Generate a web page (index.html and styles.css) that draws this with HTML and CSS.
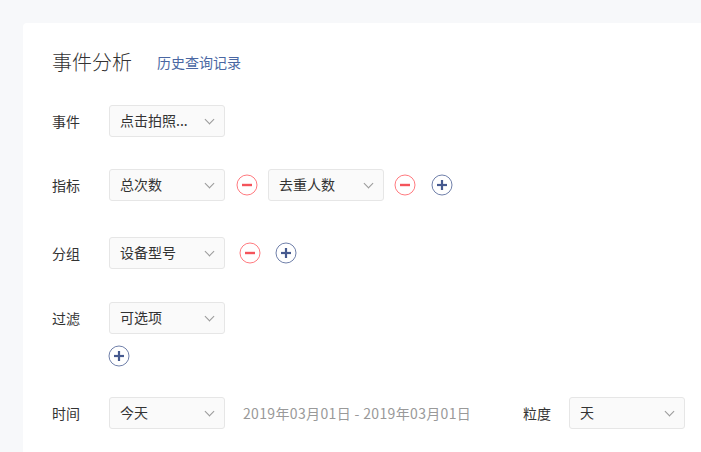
FILE: index.html
```html
<!DOCTYPE html>
<html lang="zh-CN">
<head>
  <meta charset="UTF-8" />
  <meta name="viewport" content="width=device-width, initial-scale=1.0"/>
  <title>事件分析</title>
  <link rel="stylesheet" href="styles.css">
</head>
<body>
  <div class="panel">
    <div class="header">
      <h1>事件分析</h1>
      <a href="#" class="history">历史查询记录</a>
    </div>

    <div class="row row-event">
      <span class="label">事件</span>
      <div class="select"><span>点击拍照...</span><i class="arrow"></i></div>
    </div>

    <div class="row row-metric">
      <span class="label">指标</span>
      <div class="select"><span>总次数</span><i class="arrow"></i></div>
      <svg class="btn minus m11" viewBox="0 0 22 22"><circle cx="11" cy="11" r="10"/><line x1="6" y1="11" x2="16" y2="11"/></svg>
      <div class="select m10"><span>去重人数</span><i class="arrow"></i></div>
      <svg class="btn minus m10" viewBox="0 0 22 22"><circle cx="11" cy="11" r="10"/><line x1="6" y1="11" x2="16" y2="11"/></svg>
      <svg class="btn plus m15" viewBox="0 0 22 22"><circle cx="11" cy="11" r="10"/><line x1="6" y1="11" x2="16" y2="11"/><line x1="11" y1="6" x2="11" y2="16"/></svg>
    </div>

    <div class="row row-group">
      <span class="label">分组</span>
      <div class="select"><span>设备型号</span><i class="arrow"></i></div>
      <svg class="btn minus m14" viewBox="0 0 22 22"><circle cx="11" cy="11" r="10"/><line x1="6" y1="11" x2="16" y2="11"/></svg>
      <svg class="btn plus m14" viewBox="0 0 22 22"><circle cx="11" cy="11" r="10"/><line x1="6" y1="11" x2="16" y2="11"/><line x1="11" y1="6" x2="11" y2="16"/></svg>
    </div>

    <div class="row row-filter">
      <span class="label">过滤</span>
      <div class="select"><span>可选项</span><i class="arrow"></i></div>
    </div>
    <div class="add-filter">
      <svg class="btn plus" viewBox="0 0 22 22"><circle cx="11" cy="11" r="10"/><line x1="6" y1="11" x2="16" y2="11"/><line x1="11" y1="6" x2="11" y2="16"/></svg>
    </div>

    <div class="row row-time">
      <span class="label">时间</span>
      <div class="select"><span>今天</span><i class="arrow"></i></div>
      <span class="date">2019年03月01日 - 2019年03月01日</span>
      <span class="label small">粒度</span>
      <div class="select"><span>天</span><i class="arrow"></i></div>
    </div>
  </div>
</body>
</html>
```

FILE: styles.css
```css
body {
  margin: 0;
  padding: 0;
  background-color: #f7f8fa;
  font-family: "Microsoft YaHei", "Noto Sans CJK SC", sans-serif;
  color: #333;
  font-size: 14px;
  overflow: hidden;
}

.panel {
  margin: 23px 0 0 23px;
  background-color: #fff;
  border-radius: 4px 0 0 0;
  padding: 24px 0 0 29px;
  height: 429px;
  box-sizing: border-box;
}

.header {
  display: flex;
  align-items: center;
  height: 28px;
}

.header h1 {
  margin: 0;
  font-size: 20px;
  font-weight: 300;
  color: #333;
}

.history {
  margin-left: 25px;
  margin-top: 2px;
  color: #4a67a3;
  text-decoration: none;
  font-size: 14px;
}

.row {
  display: flex;
  align-items: center;
  height: 32px;
}

.row-event { margin-top: 30px; }
.row-metric { margin-top: 32px; }
.row-group { margin-top: 36px; }
.row-filter { margin-top: 33px; }
.row-time { margin-top: 30px; }

.label {
  width: 57px;
  flex-shrink: 0;
}

.label.small {
  width: 46px;
}

.select {
  width: 116px;
  height: 32px;
  box-sizing: border-box;
  border: 1px solid #e6e6e6;
  border-radius: 3px;
  background-color: #fafafa;
  display: flex;
  align-items: center;
  justify-content: space-between;
  padding: 0 11px 2px 10px;
  flex-shrink: 0;
}

.arrow {
  width: 6px;
  height: 6px;
  border-right: 1.3px solid #999;
  border-bottom: 1.3px solid #999;
  transform: rotate(45deg);
  margin-top: -1px;
}

.btn {
  width: 22px;
  height: 22px;
  flex-shrink: 0;
  fill: none;
}

.minus { stroke: #f4545b; }
.minus circle { stroke-width: 1; stroke: #ff7a7f; }
.minus line { stroke-width: 2.4; }

.plus { stroke: #465a8f; }
.plus circle { stroke-width: 1; stroke: #7080aa; }
.plus line { stroke-width: 2.2; }

.m10 { margin-left: 10px; }
.m11 { margin-left: 11px; }
.m14 { margin-left: 14px; }
.m15 { margin-left: 15px; }

.add-filter {
  margin: 11px 0 0 56px;
  height: 22px;
}

.add-filter .btn {
  display: block;
}

.date {
  margin-left: 18px;
  width: 280px;
  flex-shrink: 0;
  color: #999;
  letter-spacing: 0.35px;
}
```
